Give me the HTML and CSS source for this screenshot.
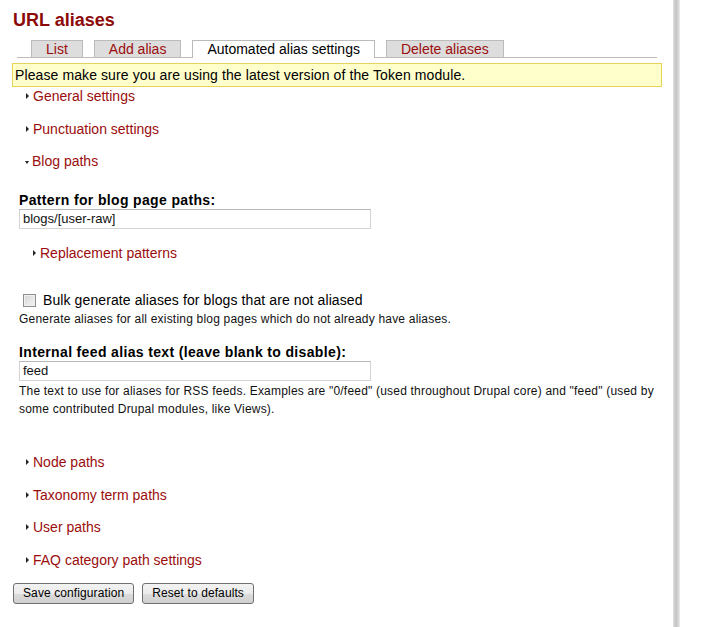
FILE: index.html
```html
<!DOCTYPE html>
<html>
<head>
<meta charset="utf-8">
<title>URL aliases</title>
<link rel="stylesheet" href="styles.css">
</head>
<body>
<div class="page">
  <div class="main">
    <h1 class="title">URL aliases</h1>
    <ul class="tabs">
      <li class="tab"><a href="#">List</a></li>
      <li class="tab"><a href="#">Add alias</a></li>
      <li class="tab active"><a href="#">Automated alias settings</a></li>
      <li class="tab"><a href="#">Delete aliases</a></li>
    </ul>
    <div class="message">Please make sure you are using the latest version of the Token module.</div>

    <div class="legend collapsed"><span class="arrow-right"></span><a href="#">General settings</a></div>
    <div class="legend collapsed"><span class="arrow-right"></span><a href="#">Punctuation settings</a></div>
    <div class="legend expanded"><span class="arrow-down"></span><a href="#">Blog paths</a></div>

    <div class="fieldset-body">
      <label class="field-label first">Pattern for blog page paths:</label>
      <div class="text-input">blogs/[user-raw]</div>
      <div class="legend sub"><span class="arrow-right"></span><a href="#">Replacement patterns</a></div>

      <div class="check-row"><span class="checkbox"></span><span class="check-label">Bulk generate aliases for blogs that are not aliased</span></div>
      <div class="description">Generate aliases for all existing blog pages which do not already have aliases.</div>

      <label class="field-label">Internal feed alias text (leave blank to disable):</label>
      <div class="text-input">feed</div>
      <div class="description">The text to use for aliases for RSS feeds. Examples are "0/feed" (used throughout Drupal core) and "feed" (used by some contributed Drupal modules, like Views).</div>
    </div>

    <div class="legend collapsed after"><span class="arrow-right"></span><a href="#">Node paths</a></div>
    <div class="legend collapsed"><span class="arrow-right"></span><a href="#">Taxonomy term paths</a></div>
    <div class="legend collapsed"><span class="arrow-right"></span><a href="#">User paths</a></div>
    <div class="legend collapsed last"><span class="arrow-right"></span><a href="#">FAQ category path settings</a></div>

    <div class="buttons">
      <button class="btn">Save configuration</button>
      <button class="btn">Reset to defaults</button>
    </div>
  </div>
  <div class="shadow"></div>
  <div class="rest"></div>
</div>
</body>
</html>
```

FILE: styles.css
```css
html, body {
  margin: 0;
  padding: 0;
  background: #fff;
}
body {
  font-family: "Liberation Sans", Arial, sans-serif;
  font-size: 14px;
  color: #000;
}
a {
  color: #9b0d0d;
  text-decoration: none;
}
.page {
  display: flex;
  min-height: 627px;
}
.main {
  width: 673px;
  box-sizing: border-box;
  padding: 10px 11px 0 12px;
}
.shadow {
  width: 7px;
  background: linear-gradient(to right, #e2e2e2, #c6c6c6 35%, #cfcfcf 65%, #ececec);
}
.rest {
  flex: 1;
}
.title {
  margin: 0;
  font-size: 18px;
  line-height: 20px;
  font-weight: bold;
  color: #8c0a0a;
  padding-left: 1px;
}
.tabs {
  list-style: none;
  margin: 10px 5px 0 5px;
  padding: 0 0 0 14px;
  display: flex;
  gap: 11px;
  border-bottom: 1px solid #bbb;
  height: 17px;
}
.tab {
  height: 16px;
  line-height: 17px;
  border: 1px solid #bbb;
  border-bottom: none;
  background: #ddd;
  padding: 0 14px;
}
.tab.active {
  background: #fff;
  height: 17px;
}
.tab.active a {
  color: #000;
}
.message {
  margin-top: 5px;
  border: 1px solid #e6d357;
  background: #ffffcc;
  padding: 2px 3px 2px 2px;
  line-height: 18px;
  letter-spacing: 0.1px;
}
.legend {
  line-height: 18px;
  height: 18px;
  padding-left: 14px;
  display: flex;
  align-items: center;
  margin-bottom: 14.5px;
}
.legend.expanded {
  margin-bottom: 0;
}
.legend.last {
  margin-bottom: 0;
}
.legend.after {
  margin-top: 35px;
}
.legend a {
  margin-left: 4px;
}
.arrow-right {
  width: 0;
  height: 0;
  border-top: 3px solid transparent;
  border-bottom: 3px solid transparent;
  border-left: 3px solid #222;
}
.arrow-down {
  width: 0;
  height: 0;
  border-left: 2.5px solid transparent;
  border-right: 2.5px solid transparent;
  border-top: 3px solid #222;
  margin-top: 2px;
  margin-left: -1px;
  margin-right: -1px;
}
.fieldset-body {
  padding-left: 7px;
}
.field-label {
  display: block;
  font-weight: bold;
  font-size: 14px;
  line-height: 18px;
  margin-top: 15px;
  letter-spacing: 0.35px;
}
.field-label.first {
  margin-top: 21px;
}
.text-input {
  width: 344px;
  height: 18px;
  border: 1px solid #d4d4d4;
  border-top-color: #b8b8b8;
  padding: 0 3px;
  font-size: 13px;
  line-height: 18px;
  color: #111;
}
.legend.sub {
  margin-top: 15px;
  margin-bottom: 0;
  padding-left: 14px;
}
.check-row {
  margin-top: 29px;
  display: flex;
  align-items: center;
  height: 18px;
  line-height: 18px;
  padding-left: 4px;
}
.checkbox {
  width: 11px;
  height: 11px;
  border: 1px solid #8e8f8f;
  background: linear-gradient(135deg, #d6d6d6, #f4f4f4);
  box-shadow: inset 0 0 0 1px #f0f0f0;
  margin-right: 7px;
}
.check-label {
  font-size: 14px;
  letter-spacing: 0.1px;
}
.description {
  margin-top: 1px;
  font-size: 12px;
  line-height: 18px;
  color: #111;
  letter-spacing: 0.2px;
}
.buttons {
  margin-top: 14px;
  display: flex;
  gap: 8px;
  padding-left: 1px;
}
.btn {
  font-family: "Liberation Sans", Arial, sans-serif;
  font-size: 12px;
  height: 21px;
  padding: 0 9px;
  border: 1px solid #707070;
  border-radius: 3px;
  background: linear-gradient(#f2f2f2 0%, #ebebeb 50%, #dddddd 51%, #cfcfcf 100%);
  color: #000;
  line-height: 19px;
  letter-spacing: 0.1px;
}
```
